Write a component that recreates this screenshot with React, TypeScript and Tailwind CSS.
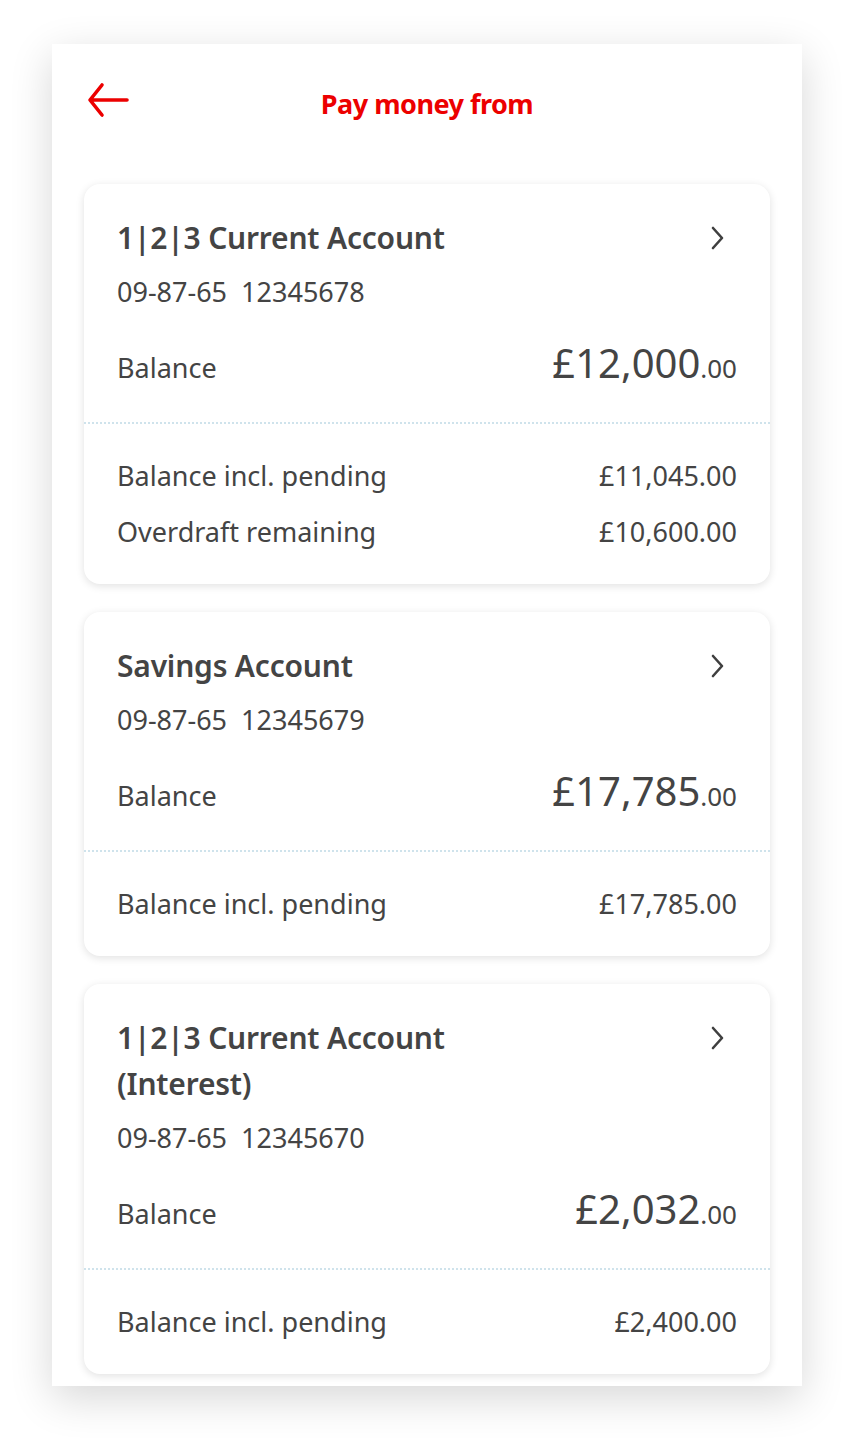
import React from "react";

type Row = { label: string; value: string };

type Account = {
  name: string[];
  sortCode: string;
  number: string;
  balance: string;
  pence: string;
  rows: Row[];
};

const ACCOUNTS: Account[] = [
  {
    name: ["1|2|3 Current Account"],
    sortCode: "09-87-65",
    number: "12345678",
    balance: "£12,000",
    pence: ".00",
    rows: [
      { label: "Balance incl. pending", value: "£11,045.00" },
      { label: "Overdraft remaining", value: "£10,600.00" },
    ],
  },
  {
    name: ["Savings Account"],
    sortCode: "09-87-65",
    number: "12345679",
    balance: "£17,785",
    pence: ".00",
    rows: [{ label: "Balance incl. pending", value: "£17,785.00" }],
  },
  {
    name: ["1|2|3 Current Account", "(Interest)"],
    sortCode: "09-87-65",
    number: "12345670",
    balance: "£2,032",
    pence: ".00",
    rows: [{ label: "Balance incl. pending", value: "£2,400.00" }],
  },
];

function Chevron() {
  return (
    <svg width="18" height="26" viewBox="0 0 18 26" fill="none" className="mt-[10px] shrink-0">
      <path d="M4 3 L13 13 L4 23" stroke="#3f3f3f" strokeWidth="2.6" strokeLinecap="round" strokeLinejoin="round" />
    </svg>
  );
}

function AccountCard({ acc }: { acc: Account }) {
  return (
    <div className="rounded-2xl bg-white shadow-[0_2px_8px_rgba(0,0,0,0.12)]">
      <div className="px-[33px] pb-[24px] pt-[31px]">
        <div className="flex items-start justify-between pr-[10px]">
          <h2 className="text-[30px] font-semibold leading-[46px] tracking-[-0.2px] text-[#444]">
            {acc.name.map((n) => (
              <div key={n}>{n}</div>
            ))}
          </h2>
          <Chevron />
        </div>
        <p className="mt-[13px] text-[27px] leading-[36px] text-[#444]">
          {acc.sortCode}&nbsp;&nbsp;{acc.number}
        </p>
        <div className="mt-[27px] flex items-center justify-between">
          <span className="text-[27px] leading-[36px] text-[#444]">Balance</span>
          <span className="leading-[52px] text-[#444]">
            <span className="text-[40px]">{acc.balance}</span>
            <span className="text-[26px]">{acc.pence}</span>
          </span>
        </div>
      </div>
      <div className="border-t-2 border-dotted border-[#cfe3ec]" />
      <div className="flex flex-col gap-[20px] px-[33px] pb-[34px] pt-[34px]">
        {acc.rows.map((r) => (
          <div key={r.label} className="flex items-center justify-between text-[27px] leading-[36px] text-[#444]">
            <span>{r.label}</span>
            <span>{r.value}</span>
          </div>
        ))}
      </div>
    </div>
  );
}

export default function App() {
  return (
    <div className="min-h-screen bg-white px-[52px] pb-[60px] pt-[44px]" style={{ fontFamily: "'Noto Sans', sans-serif" }}>
      <div className="overflow-hidden bg-white shadow-[0_12px_40px_rgba(0,0,0,0.16)]">
        <header className="relative flex h-[140px] items-center justify-center pb-[20px]">
          <svg width="44" height="36" viewBox="0 0 44 36" fill="none" className="absolute left-[35px] top-[38px]">
            <path d="M40 18 H4 M15 3 L3 18 L15 33" stroke="#ec0000" strokeWidth="3.6" strokeLinecap="round" strokeLinejoin="round" />
          </svg>
          <h1 className="text-[27px] font-bold tracking-[-0.5px] text-[#ec0000]">Pay money from</h1>
        </header>
        <div className="flex flex-col gap-[28px] px-[32px] pb-[12px]">
          {ACCOUNTS.map((a) => (
            <AccountCard key={a.number} acc={a} />
          ))}
        </div>
      </div>
    </div>
  );
}
